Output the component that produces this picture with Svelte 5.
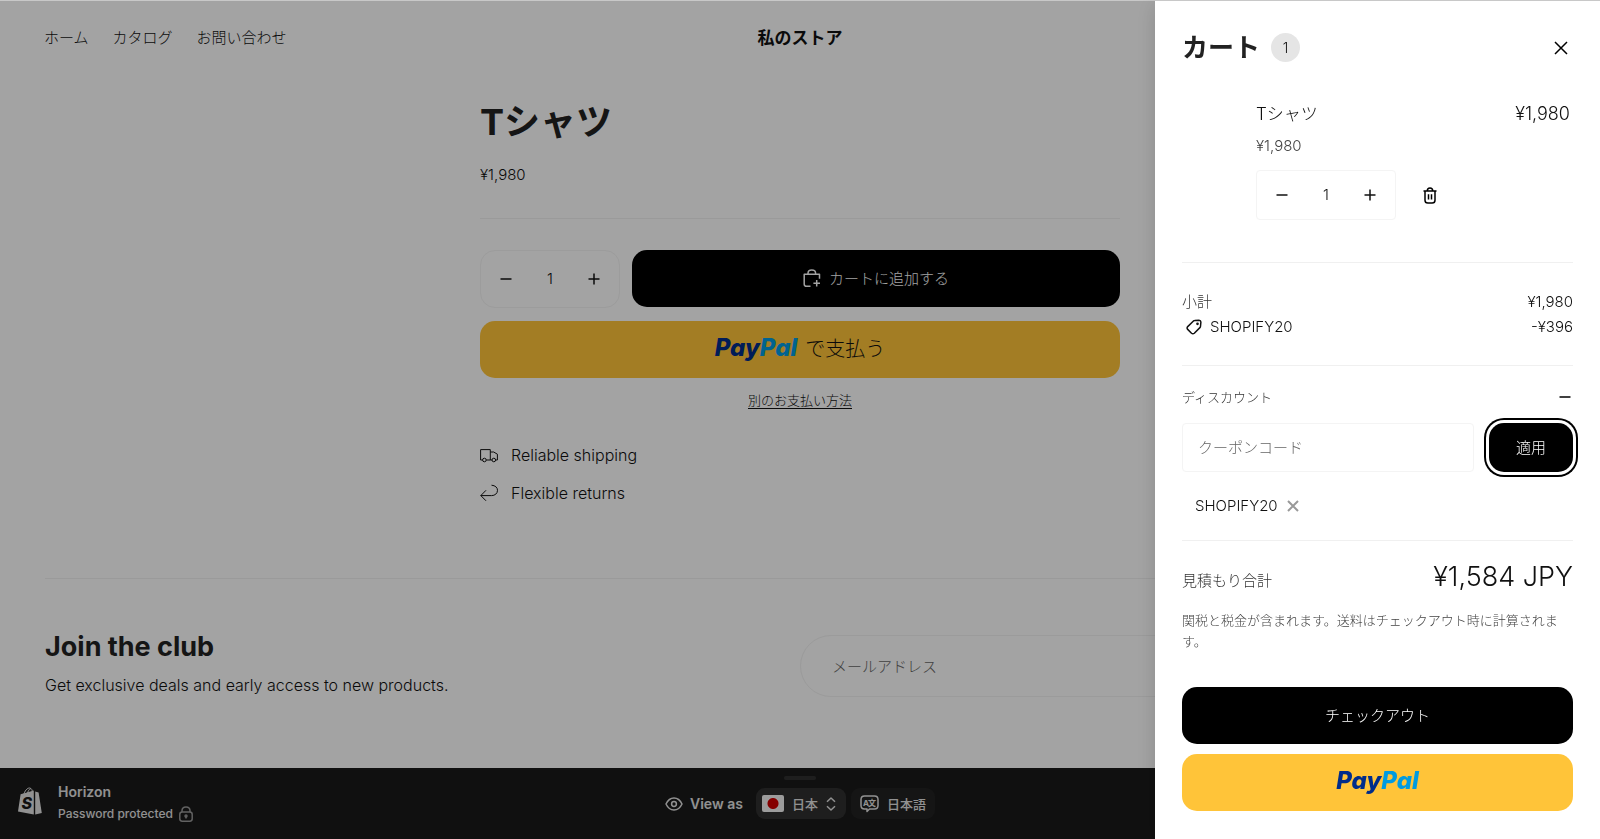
<script>
	const links = ['ホーム', 'カタログ', 'お問い合わせ'];
	const price = '¥1,980';
	let productQty = $state(1);
	let cartQty = $state(1);
	let coupon = $state('');
	let email = $state('');
</script>

{#snippet minus()}
	<svg class="sign" viewBox="0 0 12 12" aria-hidden="true"><path d="M.5 6h11" /></svg>
{/snippet}

{#snippet plus()}
	<svg class="sign" viewBox="0 0 12 12" aria-hidden="true"><path d="M.5 6h11M6 .5v11" /></svg>
{/snippet}

{#snippet paypal()}
	<span class="paypal-logo"><span class="pay">Pay</span><span class="pal">Pal</span></span>
{/snippet}

<div class="page">
	<header class="header">
		<nav class="nav">
			{#each links as link}
				<a href="#top">{link}</a>
			{/each}
		</nav>
		<a class="store-name" href="#top">私のストア</a>
	</header>

	<main class="product">
		<h1>Tシャツ</h1>
		<p class="product-price">{price}</p>
		<hr />
		<div class="buy-row">
			<div class="quantity rounded">
				<button aria-label="数量を減らす" onclick={() => productQty--}>{@render minus()}</button>
				<input aria-label="数量" type="text" bind:value={productQty} />
				<button aria-label="数量を増やす" onclick={() => productQty++}>{@render plus()}</button>
			</div>
			<button class="big-button add">
				<svg width="18" height="19" viewBox="0 0 18 19" aria-hidden="true">
					<path d="M7.5 17.3H3.6Q1.2 17.3 1.2 14.9V5.2h15.3v4.6M5 5V4.2Q5 1 8.8 1t3.8 3.2V5M13.7 11v6.6M10.4 14.3H17" />
				</svg>
				カートに追加する
			</button>
		</div>
		<button class="big-button paypal">{@render paypal()}<span class="paypal-text">で支払う</span></button>
		<a class="more-options" href="#payment">別のお支払い方法</a>
		<ul class="perks">
			<li>
				<svg width="18" height="18" viewBox="0 0 18 18" aria-hidden="true">
					<path d="M2.6 14H.6V3.6h9.7V14H6.2M10.3 6h3.4l3.7 2.2V14h-1.8M12 14h-1.7" />
					<circle cx="4.4" cy="14" r="1.8" /><circle cx="13.8" cy="14" r="1.8" />
				</svg>
				Reliable shipping
			</li>
			<li>
				<svg width="18" height="18" viewBox="0 0 18 18" aria-hidden="true">
					<path d="M11.5 1.2c3.8.3 6 2.3 6 5.1 0 3.2-2.5 5.3-6 5.3H.8M6 6.3.8 11.6 6 16.8" />
				</svg>
				Flexible returns
			</li>
		</ul>
	</main>

	<section class="club">
		<div>
			<h2>Join the club</h2>
			<p>Get exclusive deals and early access to new products.</p>
		</div>
		<input aria-label="メールアドレス" type="email" placeholder="メールアドレス" bind:value={email} />
	</section>

	<footer class="preview-bar">
		<div class="theme">
			<svg width="24" height="28" viewBox="0 0 24 28" aria-hidden="true">
				<path class="bag" d="M2.6 7.3 15.8 3.5V27.6L0 24.6zM17.2 4.6l3.4.8 3.2 20.6-6.6 1.6z" />
				<path class="handle" d="M5.6 8.5C6.5 3.6 9.4.9 11.6 1c2 .1 2.9 2.4 3 5M9.2 7.4C9.8 4 11.6 1.6 13 1.8" />
				<text x="3.5" y="21.5">S</text>
			</svg>
			<div class="theme-text">
				<strong>Horizon</strong>
				<span>
					Password protected
					<svg width="14" height="16" viewBox="0 0 14 16" aria-hidden="true">
						<path d="M3 6V4.8Q3 1 7 1t4 3.8V6" />
						<rect x=".8" y="6" width="12.4" height="9.2" rx="2.4" />
						<circle cx="7" cy="10" r="1" /><path d="M7 10v2.4" />
					</svg>
				</span>
			</div>
		</div>
		<div class="view">
			<div class="grip"></div>
			<div class="view-row">
				<svg width="18" height="14" viewBox="0 0 18 14" aria-hidden="true">
					<path d="M1 7C2.8 3.2 5.6 1 9 1s6.2 2.2 8 6c-1.8 3.8-4.6 6-8 6S2.8 10.8 1 7z" />
					<circle cx="9" cy="7" r="2.4" />
				</svg>
				<span class="view-label">View as</span>
				<button class="pill light">
					<span class="flag"></span>
					日本
					<svg width="10" height="14" viewBox="0 0 10 14" aria-hidden="true">
						<path d="M1 4.8 5 1l4 3.8M1 9.2 5 13l4-3.8" />
					</svg>
				</button>
				<button class="pill">
					<svg width="19" height="18" viewBox="0 0 19 18" aria-hidden="true">
						<path d="M4.5 1h10Q18 1 18 4.5v6Q18 14 14.5 14h-5L7 16.5V14H4.5Q1 14 1 10.5v-6Q1 1 4.5 1z" />
						<text x="3" y="11">A</text><text x="8" y="11">文</text>
					</svg>
					日本語
				</button>
			</div>
		</div>
	</footer>
</div>

<div class="overlay"></div>

<aside class="drawer" aria-label="カート">
	<div class="drawer-header">
		<h2>カート</h2>
		<span class="count">1</span>
		<button class="close" aria-label="閉じる">
			<svg width="14" height="14" viewBox="0 0 14 14" aria-hidden="true"><path d="M1 1l12 12M13 1 1 13" /></svg>
		</button>
	</div>

	<div class="item">
		<div class="item-info">
			<a href="#product">Tシャツ</a>
			<span class="unit-price">{price}</span>
			<div class="item-actions">
				<div class="quantity">
					<button aria-label="数量を減らす" onclick={() => cartQty--}>{@render minus()}</button>
					<input aria-label="数量" type="text" bind:value={cartQty} />
					<button aria-label="数量を増やす" onclick={() => cartQty++}>{@render plus()}</button>
				</div>
				<button class="trash" aria-label="削除">
					<svg width="14" height="17" viewBox="0 0 14 17" aria-hidden="true">
						<path d="M.5 4h13M4.3 3.8Q4.3 1 7 1t2.7 2.8M2 4v9.2Q2 16 4.8 16h4.4Q12 16 12 13.2V4M5.5 7.2v5.2M8.5 7.2v5.2" />
					</svg>
				</button>
			</div>
		</div>
		<span class="item-total">{price}</span>
	</div>

	<div class="block totals">
		<div class="row"><span class="muted">小計</span><span>{price}</span></div>
		<div class="row">
			<span class="code">
				<svg width="16" height="16" viewBox="0 0 16 16" aria-hidden="true">
					<path d="M8.6 1.6 13 1.2Q14.8 1.2 14.9 3l-.4 4.2q0 .8-.6 1.400l-5.600 5.600q-1.400 1.200-2.800 0L1.700 10.400q-1.200-1.400 0-2.800L7.200 2.200q.6-.6 1.400-.6z" />
					<circle cx="11.5" cy="4.8" r=".6" />
				</svg>
				SHOPIFY20
			</span>
			<span>-¥396</span>
		</div>
	</div>

	<div class="block discount">
		<button class="accordion">ディスカウント {@render minus()}</button>
		<div class="coupon">
			<input aria-label="クーポンコード" type="text" placeholder="クーポンコード" bind:value={coupon} />
			<button class="apply">適用</button>
		</div>
		<div class="applied">
			SHOPIFY20
			<button aria-label="SHOPIFY20を削除">
				<svg width="12" height="12" viewBox="0 0 12 12" aria-hidden="true"><path d="M1 1l10 10M11 1 1 11" /></svg>
			</button>
		</div>
	</div>

	<div class="block summary">
		<div class="row grand">
			<span class="muted">見積もり合計</span>
			<span class="amount">¥1,584 JPY</span>
		</div>
		<p>関税と税金が含まれます。送料はチェックアウト時に計算されます。</p>
		<div class="pay-buttons">
			<button class="big-button">チェックアウト</button>
			<button class="big-button paypal">{@render paypal()}</button>
		</div>
	</div>
</aside>

<style>
	:global(body) {
		background: #fff;
		font-family: Inter, "Noto Sans CJK JP", sans-serif;
		font-size: 15px;
		font-weight: 300;
		line-height: 24px;
		color: #111;
	}

	h1,
	h2,
	p,
	ul {
		margin: 0;
		padding: 0;
	}

	h1,
	h2 {
		color: #222;
	}

	a {
		color: inherit;
		text-decoration: none;
	}

	button,
	input {
		font: inherit;
		color: inherit;
		background: none;
		border: 0;
		padding: 0;
		margin: 0;
		box-sizing: border-box;
		min-width: 0;
	}

	button {
		cursor: pointer;
	}

	input {
		outline: none;
	}

	input::placeholder {
		color: #666;
		opacity: 1;
	}

	svg {
		flex: none;
		fill: none;
		stroke: currentColor;
		stroke-width: 1.5;
		stroke-linejoin: round;
	}

	.sign {
		width: 12px;
		height: 12px;
	}

	.page {
		min-height: 100vh;
		box-sizing: border-box;
		border-top: 1px solid #c8c8c8;
		display: flex;
		flex-direction: column;
	}

	.header {
		display: grid;
		grid-template-columns: 1fr auto 1fr;
		align-items: center;
		height: 74px;
		padding: 0 44px;
	}

	.nav {
		display: flex;
		gap: 24px;
	}

	.store-name {
		font-size: 17px;
		font-weight: 700;
	}

	.product {
		width: 40%;
		margin: 0 auto;
		padding-top: 22px;
		display: flex;
		flex-direction: column;
	}

	h1 {
		font-size: 36px;
		line-height: 50px;
		font-weight: 700;
	}

	.product-price {
		margin-top: 16px;
	}

	hr {
		width: 100%;
		margin: 31px 0;
		border: 0;
		border-top: 1px solid #f1f1f1;
	}

	.buy-row {
		display: flex;
		gap: 12px;
	}

	.quantity {
		width: 140px;
		height: 50px;
		box-sizing: border-box;
		display: grid;
		grid-template-columns: 1fr 38px 1fr;
		border: 1px solid #f4f4f4;
		border-radius: 4px;
	}

	.quantity.rounded {
		height: 58px;
		border-radius: 15px;
	}

	.quantity button {
		display: flex;
		align-items: center;
		justify-content: center;
	}

	.quantity input {
		text-align: center;
	}

	.big-button {
		height: 57px;
		border-radius: 15px;
		background: #000;
		color: #fff;
		display: flex;
		align-items: center;
		justify-content: center;
		gap: 8px;
	}

	.add {
		flex: 1;
	}

	.big-button.paypal {
		background: #ffc439;
	}

	.product .paypal {
		margin-top: 13px;
	}

	.paypal-logo {
		padding-bottom: 3px;
		font-size: 24px;
		font-style: italic;
		font-weight: 800;
		font-feature-settings: "cv11";
	}

	.pay {
		color: #002c8a;
	}

	.pal {
		color: #009be1;
	}

	.paypal-text {
		padding-bottom: 2px;
		font-size: 20px;
		color: #111;
	}

	.more-options {
		align-self: center;
		margin-top: 10px;
		font-size: 13px;
		text-decoration: underline;
		text-underline-offset: 3px;
	}

	.perks {
		list-style: none;
		margin-top: 31px;
		display: flex;
		flex-direction: column;
		gap: 14px;
	}

	.perks li {
		display: flex;
		align-items: center;
		gap: 13px;
		font-size: 16px;
	}

	.perks svg {
		stroke-width: 1;
	}

	.club {
		margin: 73px 45px 0;
		border-top: 1px solid #f1f1f1;
		padding: 56px 0 70px;
		display: grid;
		grid-template-columns: 1fr 1fr;
	}

	.club h2 {
		font-size: 27px;
		line-height: 24px;
	}

	.club p {
		margin-top: 14px;
		font-size: 16px;
	}

	.club input {
		height: 62px;
		padding: 0 31px;
		border: 1px solid #f2f2f2;
		border-radius: 31px;
	}

	.preview-bar {
		margin-top: auto;
		height: 71px;
		display: grid;
		grid-template-columns: 1fr auto 1fr;
		background: #1a1a1a;
		color: #e3e3e3;
	}

	.theme {
		display: flex;
		align-items: center;
		gap: 16px;
		padding: 0 18px 6px;
	}

	.bag {
		fill: #e3e3e3;
		stroke: none;
	}

	.handle {
		stroke-width: 1;
	}

	.theme text {
		fill: #1a1a1a;
		stroke: none;
		font-size: 16px;
		font-style: italic;
		font-weight: 800;
	}

	.theme-text {
		display: flex;
		flex-direction: column;
		padding-top: 5px;
	}

	.theme-text strong {
		font-size: 14px;
		font-weight: 600;
		line-height: 22px;
	}

	.theme-text span {
		display: flex;
		align-items: center;
		gap: 6px;
		font-size: 12px;
		font-weight: 500;
		line-height: 22px;
	}

	.theme-text svg {
		color: #999;
	}

	.view {
		display: flex;
		flex-direction: column;
		align-items: center;
	}

	.grip {
		width: 32px;
		height: 4px;
		margin: 8px 0;
		border-radius: 2px;
		background: #303030;
	}

	.view-row {
		display: flex;
		align-items: center;
		font-size: 14px;
		font-weight: 600;
	}

	.view-label {
		margin: 0 13px 0 7px;
	}

	.pill {
		height: 31px;
		padding: 0 9px;
		border-radius: 9px;
		background: #222;
		display: flex;
		align-items: center;
		gap: 8px;
		font-size: 13px;
		font-weight: 500;
	}

	.pill.light {
		margin-right: 5px;
		padding: 0 10px 0 6px;
		background: #303030;
	}

	.flag {
		width: 22px;
		height: 17px;
		border-radius: 2px;
		background: radial-gradient(circle, #d00000 5px, #f4f4f4 6px);
	}

	.pill text {
		fill: #e3e3e3;
		stroke: none;
		font-size: 8px;
		font-weight: 700;
	}

	.overlay {
		position: fixed;
		inset: 1px 0 0 0;
		background: rgba(0, 0, 0, 0.36);
	}

	.drawer {
		position: fixed;
		inset: 0 0 0 auto;
		width: 445px;
		box-sizing: border-box;
		padding: 0 27px 27px;
		border-top: 1px solid #c8c8c8;
		background: #fff;
		box-shadow: 0 4px 20px rgba(0, 0, 0, 0.15);
		display: flex;
		flex-direction: column;
		overflow-y: auto;
	}

	.drawer-header {
		height: 93px;
		flex: none;
		display: flex;
		align-items: center;
	}

	.drawer-header h2 {
		font-size: 26px;
		line-height: 32px;
	}

	.count {
		width: 29px;
		height: 29px;
		margin-left: 11px;
		border-radius: 50%;
		background: #e5e5e5;
		font-size: 14px;
		line-height: 29px;
		text-align: center;
	}

	.close {
		display: flex;
		margin-left: auto;
		padding: 5px;
		color: #000;
	}

	.item {
		display: flex;
		justify-content: space-between;
		padding: 6px 3px 0 74px;
	}

	.item-info {
		display: flex;
		flex-direction: column;
	}

	.item-info a {
		font-size: 17px;
		line-height: 28px;
	}

	.item-total {
		font-size: 18px;
		line-height: 28px;
	}

	.unit-price {
		margin-top: 6px;
		color: #444;
	}

	.item-actions {
		margin-top: 12px;
		display: flex;
		align-items: center;
		gap: 22px;
	}

	.trash {
		display: flex;
		padding: 5px;
		color: #000;
	}

	.block {
		border-top: 1px solid #f0f0f0;
	}

	.row {
		display: flex;
		justify-content: space-between;
		line-height: 25px;
	}

	.muted {
		color: #333;
	}

	.totals {
		margin-top: 42px;
		padding: 26px 0;
	}

	.code {
		display: flex;
		align-items: center;
		gap: 8px;
		padding-left: 4px;
	}

	.accordion {
		width: 100%;
		display: flex;
		align-items: center;
		justify-content: space-between;
		margin-top: 19px;
		padding-right: 2px;
		font-size: 13px;
		color: #333;
	}

	.accordion .sign {
		color: #000;
	}

	.coupon {
		display: flex;
		gap: 15px;
		margin-top: 14px;
	}

	.coupon input {
		flex: 1;
		height: 49px;
		padding: 0 15px;
		border: 1px solid #f4f4f4;
		border-radius: 4px;
	}

	.apply {
		width: 84px;
		border-radius: 15px;
		background: #000;
		color: #fff;
		box-shadow: 0 0 0 3px #fff, 0 0 0 5px #000;
	}

	.applied {
		display: flex;
		align-items: center;
		gap: 9px;
		padding: 22px 13px;
	}

	.applied button {
		display: flex;
		color: #999;
	}

	.applied svg {
		stroke-width: 2;
	}

	.grand {
		align-items: baseline;
		padding-top: 20px;
		line-height: 32px;
	}

	.amount {
		font-size: 27px;
	}

	.summary p {
		margin-top: 13px;
		font-size: 13px;
		line-height: 21px;
		color: #444;
	}

	.pay-buttons {
		display: flex;
		flex-direction: column;
		gap: 10px;
		margin-top: 35px;
	}
</style>
